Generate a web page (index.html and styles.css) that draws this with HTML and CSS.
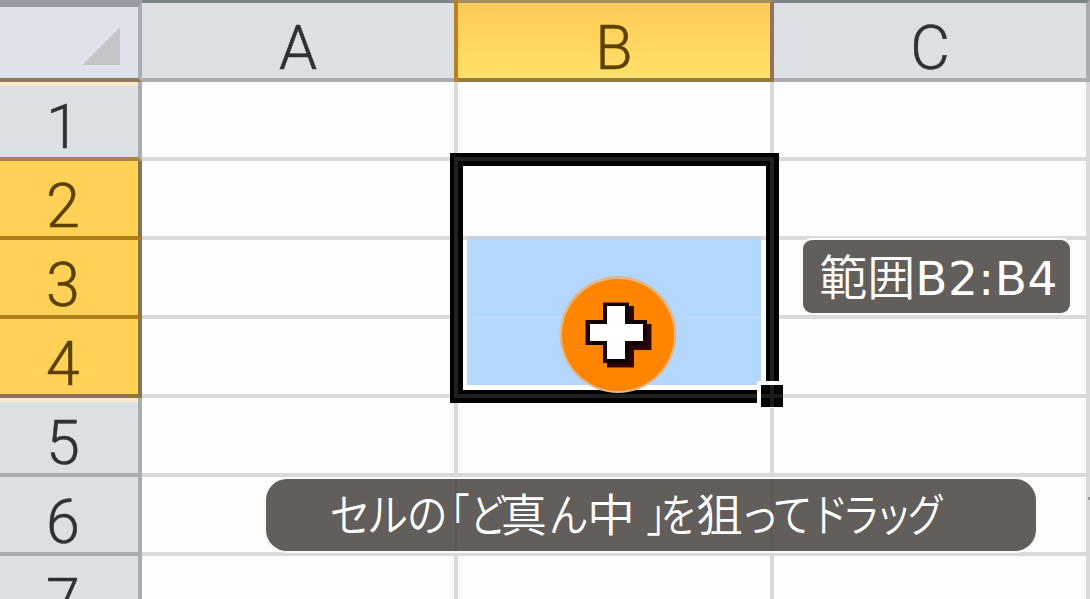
FILE: index.html
```html
<!DOCTYPE html>
<html lang="ja">
<head>
    <meta charset="UTF-8">
    <meta name="viewport" content="width=device-width, initial-scale=1.0">
    <title>セルの範囲選択</title>
    <link rel="stylesheet" href="styles.css">
</head>
<body>
    <div class="sheet">
        <div class="corner">
            <svg width="38" height="38" viewBox="0 0 38 38"><path d="M38 0V38H0Z" fill="#c4c6ca"/></svg>
        </div>
        <div class="col-head">A</div>
        <div class="col-head active">B</div>
        <div class="col-head">C</div>

        <div class="row-head after">1</div><div class="cell"></div><div class="cell"></div><div class="cell"></div>
        <div class="row-head active">2</div><div class="cell"></div><div class="cell"></div><div class="cell"></div>
        <div class="row-head active">3</div><div class="cell"></div><div class="cell"></div><div class="cell"></div>
        <div class="row-head active last">4</div><div class="cell"></div><div class="cell"></div><div class="cell"></div>
        <div class="row-head after">5</div><div class="cell"></div><div class="cell"></div><div class="cell"></div>
        <div class="row-head">6</div><div class="cell"></div><div class="cell"></div><div class="cell mark"></div>
        <div class="row-head">7</div><div class="cell"></div><div class="cell"></div><div class="cell"></div>

        <!-- 選択枠とカーソル -->
        <svg class="selection" width="334" height="256" viewBox="449 152 334 256">
            <path d="M463 240H766V390H463Z" fill="#fdfdfd"/>
            <path d="M467 240H761V385H467Z" fill="#b3d7ff"/>
            <path d="M467 236H761V240H467Z" fill="#c5d1df"/>
            <path d="M467 316H761V319H467Z" fill="#bad8fa"/>
            <path d="M450 153H779V381H766V166H463V390H757V403H450Z" fill="#000"/>
            <path d="M454 157H774V381H770V161H458V394H757V398H454Z" fill="#202020"/>
            <path d="M757 381H783V408H757Z" fill="#fdfdfd"/>
            <path d="M761 385H783V407H761Z" fill="#000"/>
            <path d="M770 385H774V407H770ZM761 394H783V398H761Z" fill="#1a1a1a"/>
            <circle cx="618" cy="334.500" r="58.500" fill="#dfb88c"/>
            <circle cx="618" cy="335" r="56" fill="#ff8400"/>
            <path d="M603 302H629V306H634V320H647V324H652V350H634V368H607V363H603V345H585V320H603Z" fill="#a34a00"/>
            <path d="M607 306H634V324H651V350H634V367H607V345H590V324H607Z" fill="#300500"/>
            <path d="M603 303H629V320H647V345H629V363H603V345H586V320H603Z" fill="#100000"/>
            <path d="M607 306H625V324H643V341H625V359H607V341H590V324H607Z" fill="#fff"/>
        </svg>

        <div class="label range"><span class="kanji">範囲</span><span class="ref">B2:B4</span></div>
        <div class="label hint">
            <svg width="770" height="72" viewBox="0 0 770 72" fill="#fff">
                <path d="M188 0H192V72H188ZM504 0H508V72H504Z" fill="#5d5956"/>
                <text y="53">
                    <tspan x="64" textLength="117" lengthAdjust="spacingAndGlyphs">セルの</tspan>
                    <tspan x="184" textLength="19" lengthAdjust="spacingAndGlyphs">「</tspan>
                    <tspan x="204" textLength="35" lengthAdjust="spacingAndGlyphs">ど</tspan>
                    <tspan x="235" textLength="46" lengthAdjust="spacingAndGlyphs">真</tspan>
                    <tspan x="284" textLength="37" lengthAdjust="spacingAndGlyphs">ん</tspan>
                    <tspan x="321" textLength="48" lengthAdjust="spacingAndGlyphs">中</tspan>
                    <tspan x="381" textLength="19" lengthAdjust="spacingAndGlyphs">」</tspan>
                    <tspan x="395" textLength="34" lengthAdjust="spacingAndGlyphs">を</tspan>
                    <tspan x="430" textLength="47" lengthAdjust="spacingAndGlyphs">狙</tspan>
                    <tspan x="478" textLength="67" lengthAdjust="spacingAndGlyphs">って</tspan>
                    <tspan x="549" textLength="63" lengthAdjust="spacingAndGlyphs">ドラ</tspan>
                    <tspan x="613" textLength="63" lengthAdjust="spacingAndGlyphs">ッグ</tspan>
                </text>
            </svg>
        </div>
    </div>
</body>
</html>
```

FILE: styles.css
```css
body {
    margin: 0;
    overflow: hidden;
    background-color: #fdfdfd;
}
.sheet {
    position: relative;
    display: grid;
    grid-template-columns: 142px 316px 316px 316px;
    grid-template-rows: 82px repeat(7, 79px);
    height: 599px;
    overflow: hidden;
    font-family: Roboto, "Liberation Sans", sans-serif;
    font-weight: 300;
    font-size: 61px;
    color: #2c3236;
}
.corner, .col-head, .row-head, .cell {
    box-sizing: border-box;
    border-right: 4px solid #dadada;
    border-bottom: 4px solid #dadada;
}
.corner, .col-head, .row-head {
    display: flex;
    background-color: #dce0e4;
    border-color: #a9adb2;
}
.corner {
    justify-content: flex-end;
    align-items: flex-end;
    padding: 0 18px 13px 0;
    border-top: 7px solid #969ca3;
    border-bottom-color: #8d795b;
    background-color: #dfe2ea;
}
.col-head {
    justify-content: center;
    align-items: center;
    padding-top: 14px;
    border-top: 3px solid #7d8487;
    -webkit-text-stroke: 0.5px;
}
.col-head.active {
    background: linear-gradient(#ffc957, #ffe16a);
    border-color: #a28e61 #957257 #927b43;
    box-shadow: -4px 0 0 #b9811e;
    color: #5b4000;
}
.row-head {
    justify-content: center;
    align-items: center;
    padding: 14px 12px 0 0;
    -webkit-text-stroke: 0.5px;
}
.row-head.active {
    background-color: #ffd257;
    border-right-color: #85754f;
    border-bottom-color: #b07d1b;
    color: #5b4000;
}
.row-head.after {
    box-shadow: inset 0 4px 0 #fbe7ca;
}
.row-head.after:nth-child(5) {
    border-bottom-color: #a78639;
}
.row-head.last {
    border-bottom-color: #8f773f;
}
.cell.mark {
    background: linear-gradient(#666, #666) right 20px / 2px 3px no-repeat border-box;
    border-right-color: rgba(190, 190, 190, 0.55);
}
.selection {
    position: absolute;
    left: 449px;
    top: 152px;
}
.label {
    position: absolute;
    box-sizing: border-box;
    display: flex;
    align-items: center;
    justify-content: center;
    white-space: nowrap;
    background-color: #625e5b;
    color: #fff;
    font-family: "Noto Sans CJK JP", sans-serif;
    font-weight: 400;
    box-shadow: 0 0 0 2px #fafafa;
}
.range {
    left: 803px;
    top: 240px;
    width: 267px;
    height: 73px;
    padding-left: 4px;
    border-radius: 9px;
    font-size: 48px;
    font-weight: 350;
}
.range .kanji {
    padding-bottom: 5px;
}
.range .ref {
    padding-top: 3px;
    font-family: "DejaVu Sans", sans-serif;
    font-weight: 400;
    font-size: 47px;
    letter-spacing: 0.5px;
}
.hint {
    left: 266px;
    top: 479px;
    width: 770px;
    height: 72px;
    border-radius: 21px;
    font-size: 45px;
    font-weight: 350;
    font-feature-settings: "palt";
}
```
